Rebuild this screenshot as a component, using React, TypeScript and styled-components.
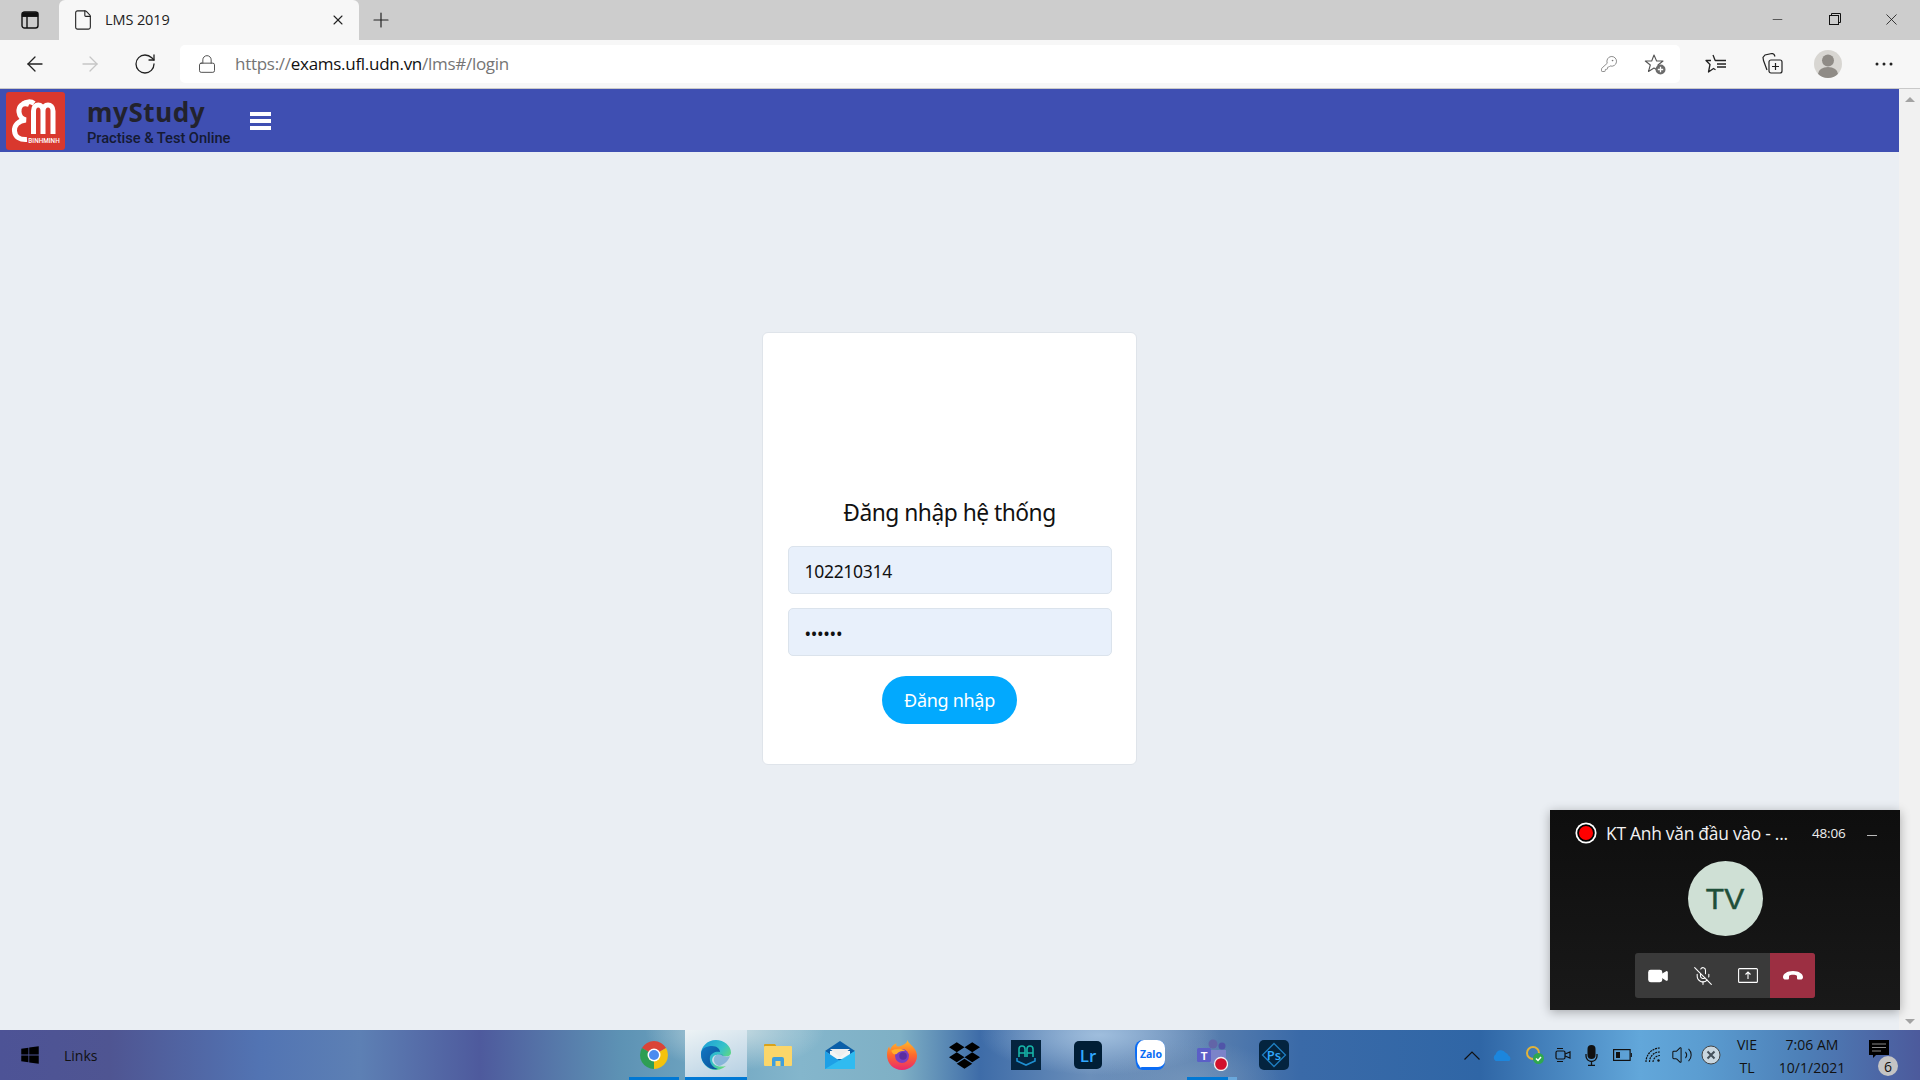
import React from "react";
import styled, { createGlobalStyle } from "styled-components";
import { ArrowLeft, ArrowRight, RotateCw, Lock, KeyRound, X, Plus, Minus, File, Video, MicOff, Volume2 } from "lucide-react";
import { FaDropbox, FaWindows } from "react-icons/fa";

const Global = createGlobalStyle`
  html, body { margin: 0; padding: 0; width: 1920px; height: 1080px; overflow: hidden; }
  * { box-sizing: border-box; }
`;

const Screen = styled.div`
  width: 1920px; height: 1080px; display: flex; flex-direction: column;
  font-family: "Noto Sans", "Open Sans", sans-serif; color: #111; overflow: hidden;
`;
const TabStrip = styled.div`
  height: 40px; background: #cdcdcd; display: flex; align-items: flex-end; flex: none;
`;
const SideToggle = styled.div`
  width: 59px; height: 40px; display: flex; align-items: center; justify-content: center;
`;
const Tab = styled.div`
  width: 300px; height: 40px; background: #f7f7f7; border-radius: 6px 6px 0 0;
  display: flex; align-items: center; padding: 0 13px 0 13px; gap: 11px; color: #222;
`;
const TabTitle = styled.span`
  flex: 1; letter-spacing: -0.1px; font-family: "Open Sans", sans-serif; font-size: 14.5px; padding-bottom: 2px;
`;
const NewTab = styled.div`
  width: 44px; height: 40px; display: flex; align-items: center; justify-content: center;
`;
const WindowButtons = styled.div`
  margin-left: auto; display: flex; height: 40px; align-items: center; padding-bottom: 2px;
`;
const WindowButton = styled.div`
  width: 57px; display: flex; align-items: center; justify-content: center;
`;
const Toolbar = styled.div`
  height: 49px; background: #f7f7f7; border-bottom: 1px solid #c9c9c9; display: flex; align-items: center; flex: none;
  padding: 0 0 1px 7px;
`;
const NavButton = styled.div`
  width: 55px; display: flex; align-items: center; justify-content: center;
`;
const AddressBar = styled.div`
  width: 1500px; height: 38px; margin-left: 8px; background: #fff; border-radius: 5px; display: flex; align-items: center; padding: 0 14px 0 17px;
`;
const Url = styled.div`
  margin-left: 18px; font-size: 17px; letter-spacing: -0.28px; color: #757575; flex: 1;
  font-family: "Open Sans", sans-serif;
`;
const UrlHost = styled.span` color: #111; `;
const AddressTools = styled.div` display: flex; align-items: center; gap: 26px; `;
const ToolIcons = styled.div`
  display: flex; align-items: center; margin-left: 8px;
`;
const ToolIcon = styled.div`
  width: 56px; display: flex; align-items: center; justify-content: center;
`;
const Avatar = styled.div`
  width: 28px; height: 28px; border-radius: 50%; background: #d8d6d2; overflow: hidden; display: flex;
`;
const Main = styled.div`
  flex: 1; min-height: 0; display: flex; position: relative; background: #eaeef3;
`;
const Page = styled.div`
  flex: 1; min-width: 0; display: flex; flex-direction: column;
`;
const AppHeader = styled.header`
  height: 63px; flex: none; background: #3f4fb2; display: flex; align-items: center; padding: 1px 0 0 6px;
`;
const Logo = styled.div`
  width: 59px; height: 58px; background: #d9382e; border-radius: 3px; flex: none;
`;
const Brand = styled.div`
  margin-left: 22px; width: 162px; display: flex; flex-direction: column;
`;
const BrandName = styled.div`
  font-family: "Noto Sans", sans-serif; font-weight: 700; font-size: 26px; line-height: 32px; letter-spacing: 0.6px; color: #22222c;
`;
const BrandTag = styled.div`
  font-family: "Roboto", sans-serif; font-weight: 500; font-size: 15px; line-height: 17px; margin-top: 2px; letter-spacing: -0.05px; color: #151a33; white-space: nowrap;
  transform-origin: left center; transform: scaleX(0.98);
`;
const Burger = styled.div`
  width: 21px; height: 18px; display: flex; flex-direction: column; justify-content: space-between; margin-top: -1px; margin-left: 1px;
`;
const BurgerBar = styled.span`
  display: block; height: 4px; background: #fff;
`;
const PageBody = styled.main`
  flex: 1; display: flex; justify-content: center; padding-top: 180px;
`;
const Card = styled.section`
  width: 375px; height: 433px; background: #fff; border: 1px solid #dfe4ea; border-radius: 6px;
  padding: 165px 24px 0; display: flex; flex-direction: column; align-items: center;
`;
const CardTitle = styled.h1`
  margin: 0 0 18px; font-weight: 400; font-size: 22.8px; line-height: 30px; letter-spacing: -0.5px; color: #111;
  font-family: "Noto Sans", sans-serif;
`;
const Field = styled.input`
  width: 324px; height: 48px; flex: none; background: #e8f0fb; border: 1px solid #dbe3ec; border-radius: 5px;
  padding: 2px 16px 0; font-size: 17.5px; letter-spacing: -0.3px; font-family: "Noto Sans", sans-serif; color: #111; margin-bottom: 14px; outline: none;
`;
const Submit = styled.button`
  width: 135px; height: 48px; border: 0; border-radius: 24px; background: #02a9fe; color: #fff; margin-top: 6px;
  font-family: "Noto Sans", sans-serif; font-size: 18px; letter-spacing: -0.3px; padding: 0;
`;
const ScrollTrack = styled.div`
  width: 21px; background: #f1f1f1; display: flex; flex-direction: column; justify-content: space-between; align-items: center; padding: 8px 0 6px;
`;
const ScrollArrow = styled.div<{ $down?: boolean }>`
  width: 0; height: 0; border-left: 5px solid transparent; border-right: 5px solid transparent;
  ${p => p.$down ? "border-top: 5px solid #a3a3a3;" : "border-bottom: 5px solid #a3a3a3;"}
`;
const CallWindow = styled.aside`
  position: absolute; right: 20px; bottom: 20px; width: 350px; height: 200px; background: linear-gradient(#0e0e0e, #191919);
  box-shadow: 0 2px 10px rgba(0,0,0,.3); color: #fff; display: flex; flex-direction: column; align-items: center;
`;
const CallTop = styled.div`
  width: 100%; height: 45px; padding: 0 20px 0 26px; margin-bottom: 2px; display: flex; align-items: center; font-family: "Open Sans", sans-serif;
`;
const RecDot = styled.span`
  width: 20px; height: 20px; border-radius: 50%; background: #f00; border: 2px solid #000; box-shadow: 0 0 0 2px #fff; flex: none; transform: scale(.88);
`;
const CallTitle = styled.span`
  margin-left: 10px; width: 206px; font-size: 17.4px; letter-spacing: -0.25px; white-space: nowrap; color: #f2f2f2;
`;
const CallTime = styled.span` font-size: 13.5px; letter-spacing: -0.2px; color: #eee; `;
const CallMin = styled.span` margin-left: 22px; width: 10px; height: 1.5px; background: #bbb; margin-top: 6px; `;
const CallAvatar = styled.div`
  width: 75px; height: 75px; border-radius: 50%; background: #cfe0d5; color: #1f4f39; font-size: 30px; display: flex; align-items: center; justify-content: center;
  font-family: "Liberation Sans", sans-serif; margin-top: 4px; -webkit-text-stroke: .5px #1f4f39;
`;
const CallBar = styled.div`
  width: 180px; height: 45px; margin-top: 17px; border-radius: 3px; background: #3a3a3a; display: flex; overflow: hidden;
`;
const CallBtn = styled.div<{ $danger?: boolean }>`
  width: 45px; display: flex; align-items: center; justify-content: center; background: ${p => p.$danger ? "#9c2f42" : "transparent"};
`;
const Taskbar = styled.footer`
  height: 50px; flex: none; display: flex; align-items: stretch; position: relative;
  background:
    radial-gradient(ellipse 90px 40px at 735px 0px, rgba(225,235,235,.75), transparent),
    radial-gradient(ellipse 90px 40px at 1190px 50px, rgba(135,165,195,.5), transparent),
    radial-gradient(ellipse 120px 40px at 1100px 5px, rgba(165,195,225,.9), transparent),
    linear-gradient(90deg, #4d5396 0, #4f5592 110px, #5274b3 260px, #5d80b4 360px, #4e5a9d 480px, #5d92b4 620px, #6ea4c0 700px, #84b6cc 800px, #7fb0c5 900px, #3e6ca8 980px, #6b8fba 1090px, #5b80af 1200px, #3a6aa8 1300px, #2f66a6 1480px, #62a7da 1640px, #5b9dd1 1700px, #4d80b8 1800px, #4c5a9c 1920px);
`;
const StartBtn = styled.div`
  width: 60px; display: flex; align-items: center; justify-content: center; color: #000;
`;
const Links = styled.div`
  width: 563px; display: flex; align-items: center; padding-left: 4px; font-size: 14px; color: #111;
  font-family: "Open Sans", sans-serif;
`;
const Apps = styled.div` display: flex; `;
const AppSlot = styled.div<{ $active?: boolean; $run?: boolean; $split?: boolean }>`
  width: 62px; height: 50px; display: flex; align-items: center; justify-content: center; position: relative;
  ${p => p.$active ? "background: linear-gradient(160deg, #edf3f5, #b3cee2); box-shadow: inset 0 -3px 0 #0078d4;" : ""}
  ${p => p.$run ? `&::after { content: ""; position: absolute; left: 6px; right: 6px; bottom: 0; height: 3px;
    background: ${p.$split ? "linear-gradient(90deg, #0078d4 41px, #6aa8dc 41px)" : "#0078d4"}; }` : ""}
`;
const Tray = styled.div`
  margin-left: auto; display: flex; align-items: center; color: #111; padding-right: 25px;
`;
const TrayIcon = styled.div<{ $w: number }>`
  width: ${p => p.$w}px; display: flex; align-items: center; justify-content: center;
`;
const Lang = styled.div`
  width: 46px; text-align: center; font-size: 14px; line-height: 23px; font-family: "Open Sans", sans-serif; margin-left: -5px; color: #111; padding-top: 1px;
`;
const Clock = styled(Lang)`
  width: 80px; margin-left: 2px;
`;
const Notif = styled.div`
  position: relative; width: 32px; margin-left: 11px; height: 30px;
`;
const NotifGlyph = styled.svg`
  display: block; margin: 0 0 0 6px;
`;
const NotifBadge = styled.span`
  position: absolute; right: -3px; bottom: -6px; width: 20px; height: 20px; border-radius: 50%; background: #c4c4c4; color: #111;
  font-size: 14px; display: flex; align-items: center; justify-content: center; font-family: "Open Sans", sans-serif;
`;

const SW = 1.3;

const AppLogo = () => (
  <svg viewBox="0 0 59 58" width="59" height="58">
    <g fill="none" stroke="#fff" strokeWidth="5">
      <path d="M23 12.500C16 10 12.500 14.500 13 20c.5 5 4 7.500 7 8-8 .5-12 6-11.500 11C9 45 14 48 21 47.500" />
      <path d="M27.500 42V19c0-8 9.500-8 9.500 0v23M37 19c0-8 10-8 10 0v23M17 12c3-2.500 8-3 11-.5" />
    </g>
    <text transform="translate(38 51) scale(.8 1)" fill="#fff" fontSize="8" fontFamily="Roboto, sans-serif" fontWeight="500" textAnchor="middle">BINHMINH</text>
  </svg>
);
const ChromeIcon = () => (
  <svg viewBox="0 0 28 28" width="28" height="28">
    <path d="M14 14L1.900 7A14 14 0 0 1 26.100 7Z" fill="#db4437" />
    <path d="M14 14L26.100 7A14 14 0 0 1 14 28Z" fill="#f4c20d" />
    <path d="M14 14L14 28A14 14 0 0 1 1.900 7Z" fill="#2e9e54" />
    <circle cx="14" cy="14" r="6.500" fill="#fff" /><circle cx="14" cy="14" r="5" fill="#4b8bf0" />
  </svg>
);
const EdgeIcon = () => (
  <svg viewBox="0 0 30 30" width="30" height="30">
    <defs>
      <linearGradient id="edgeA" x1="0" y1="0" x2="1" y2=".7"><stop offset="0" stopColor="#1a9bd8" /><stop offset=".6" stopColor="#35c1c9" /><stop offset="1" stopColor="#6ede6a" /></linearGradient>
      <linearGradient id="edgeB" x1="0" y1="0" x2="1" y2="1"><stop offset="0" stopColor="#1278c4" /><stop offset="1" stopColor="#0c4f96" /></linearGradient>
    </defs>
    <path d="M15 0C6 0 0 7 0 14c0 4 1 8 4 11 5 6 13 6 18 3l3-2c-4 1-9 1-12-2-3-3-2-6 0-8 2-1.500 7-2 8-.500 2 1 9 2 9-3C30 6 23 0 15 0Z" fill="url(#edgeA)" />
    <path d="M0 14c0-6 6-8 11-8 5 0 8 3 8 6-4-1-9 1-10 5-1 5 2 10 8 12-8 2-17-5-17-15Z" fill="url(#edgeB)" />
    <path d="M13 18c1-4 7-5 9-3 0 2 6 2 7 1-1 4-6 9-11 10-3-1-6-4-5-8Z" fill="#0f6cbd" opacity=".35" />
  </svg>
);
const ExplorerIcon = () => (
  <svg viewBox="0 0 28 22" width="28" height="22">
    <path d="M0 1a1 1 0 0 1 1-1h10l2 3H0Z" fill="#d9a21a" />
    <rect y="2" width="28" height="20" rx="1" fill="#fbd66a" />
    <path d="M8 22v-7a2 2 0 0 1 2-2h8a2 2 0 0 1 2 2v7h-3.500v-5h-5v5Z" fill="#3f9fdc" />
  </svg>
);
const MailIcon = () => (
  <svg viewBox="0 0 30 28" width="30" height="28">
    <path d="M0 10L15 0l15 10-15 10Z" fill="#0b5fa8" />
    <path d="M5 10h20v8H5Z" fill="#f5f5f5" /><path d="M5 8h20l-10 8Z" fill="#eee" />
    <path d="M0 10l15 10 15-10v18H0Z" fill="#1ea0e6" />
    <path d="M30 10v18H0Z" fill="#35c2f2" opacity=".8" />
  </svg>
);
const FirefoxIcon = () => (
  <svg viewBox="0 0 28 28" width="30" height="30">
    <defs>
      <linearGradient id="ffA" x1="0" y1="0" x2="0" y2="1"><stop offset="0" stopColor="#ffbd2e" /><stop offset=".5" stopColor="#ff6a2a" /><stop offset="1" stopColor="#e8286f" /></linearGradient>
    </defs>
    <path d="M19 0c1 3 3 4 5 6 3 3 4 6 4 9 0 7-6 13-14 13S0 22 0 14c0-3 .5-6 2-8l1 3c1-3 3-5 6-6-1 2 0 3 2 3 4-1 8-3 8-6Z" fill="url(#ffA)" />
    <circle cx="14" cy="15" r="6.500" fill="#7a3fc1" />
    <path d="M4 10c3-2 9-3 13 0-4 0-6 1-8 3-2 1-4 0-5-3Z" fill="#ffae2c" />
    <circle cx="15" cy="15" r="3.500" fill="#5a2da0" />
  </svg>
);
const ShieldAppIcon = () => (
  <svg viewBox="0 0 30 30" width="30" height="30">
    <rect width="30" height="30" fill="#04243f" />
    <g fill="none" strokeWidth="1.600">
      <path d="M8 17V9a3 3 0 0 1 6 0v8M16 17V9a3 3 0 0 1 6 0v8M8 13h6M16 13h6" stroke="#17b5a8" />
      <path d="M6 18v3l9 4 9-4v-3" stroke="#1f8fd0" />
    </g>
  </svg>
);
const LrIcon = () => (
  <svg viewBox="0 0 28 28" width="28" height="28">
    <rect width="28" height="28" rx="5" fill="#001e36" />
    <text x="14" y="20.500" fill="#31a8ff" fontSize="17" fontWeight="600" fontFamily="Open Sans, sans-serif" textAnchor="middle">Lr</text>
  </svg>
);
const ZaloIcon = () => (
  <svg viewBox="0 0 30 30" width="30" height="30">
    <path d="M8 0h14a8 8 0 0 1 8 8v14a8 8 0 0 1-8 8H8c-2 0-5-1-6-3C0 22 0 15 0 8a8 8 0 0 1 8-8Z" fill="#0a6cf5" />
    <path d="M9 0h13a8 8 0 0 1 8 8v12a7 7 0 0 1-7 7H9c-2 0-2 0-4 .500 0-2-3-3-3-9V8a8 8 0 0 1 7-8Z" fill="#fff" />
    <text x="16" y="18" fill="#0a6cf5" fontSize="10.500" fontWeight="700" fontFamily="Noto Sans, sans-serif" textAnchor="middle">Zalo</text>
  </svg>
);
const TeamsIcon = () => (
  <svg viewBox="0 0 32 32" width="32" height="32">
    <circle cx="17" cy="5" r="4.500" fill="#6264a7" /><circle cx="26" cy="7" r="3.500" fill="#5055a8" />
    <path d="M12 11h18v8a6 6 0 0 1-6 6h-6a6 6 0 0 1-6-6Z" fill="#7b83c9" />
    <rect x="1" y="9" width="14" height="14" rx="1.500" fill="#5b5fc7" />
    <text x="8" y="20.500" fill="#fff" fontSize="11" fontWeight="700" fontFamily="Liberation Sans, sans-serif" textAnchor="middle">T</text>
    <circle cx="25" cy="25" r="6.500" fill="#d2102c" stroke="#f2f2f2" strokeWidth="1.300" />
  </svg>
);
const PsIcon = () => (
  <svg viewBox="0 0 30 30" width="30" height="30">
    <rect width="30" height="30" rx="5" fill="#04243f" />
    <path d="M15 3.500L26.500 15 15 26.500 3.500 15Z" fill="none" stroke="#1f7fc0" strokeWidth="1.300" />
    <text x="15" y="20" fill="#31a8ff" fontSize="13" fontWeight="600" fontFamily="Open Sans, sans-serif" textAnchor="middle">Ps</text>
  </svg>
);

export default function App() {
  return (
    <Screen>
      <Global />
      <TabStrip>
        <SideToggle>
          <svg width="18" height="18" viewBox="0 0 18 18" fill="none" stroke="#111" strokeWidth="1.400">
            <rect x="1" y="1" width="16" height="16" rx="2.500" /><path d="M1 5h16M6 5v12" /><path d="M1.500 2h15v3h-15Z" fill="#111" />
          </svg>
        </SideToggle>
        <Tab>
          <File size={22} strokeWidth={1.2} color="#222" />
          <TabTitle>LMS 2019</TabTitle>
          <X size={16} strokeWidth={1.6} color="#222" />
        </Tab>
        <NewTab><Plus size={24} strokeWidth={1.2} color="#222" /></NewTab>
        <WindowButtons>
          <WindowButton><Minus size={15} strokeWidth={1} color="#111" /></WindowButton>
          <WindowButton>
            <svg width="14" height="14" viewBox="0 0 14 14" fill="none" stroke="#111"><rect x="1.500" y="3.500" width="9" height="9" /><path d="M3.500 3.500v-2h9v9h-2" /></svg>
          </WindowButton>
          <WindowButton><X size={19} strokeWidth={1} color="#111" /></WindowButton>
        </WindowButtons>
      </TabStrip>
      <Toolbar>
        <NavButton><ArrowLeft size={24} strokeWidth={SW} color="#222" /></NavButton>
        <NavButton><ArrowRight size={24} strokeWidth={SW} color="#c6c6c6" /></NavButton>
        <NavButton><RotateCw size={24} strokeWidth={SW} color="#222" /></NavButton>
        <AddressBar>
          <Lock size={20} strokeWidth={1.1} color="#444" />
          <Url>https://<UrlHost>exams.ufl.udn.vn</UrlHost>/lms#/login</Url>
          <AddressTools>
            <KeyRound size={18} strokeWidth={1.1} color="#777" />
            <svg width="22" height="22" viewBox="0 0 22 22" fill="none">
              <path d="M10 2l2.600 6h6.400l-5 4 1.800 6.500L10 15l-5.500 3.500L6.300 12l-5-4h6.400Z" stroke="#555" strokeWidth="1.100" strokeLinejoin="round" />
              <circle cx="16.500" cy="16.500" r="5" fill="#6b6b6b" /><path d="M16.500 13.800v5.400M13.800 16.500h5.400" stroke="#fff" strokeWidth="1.300" />
            </svg>
          </AddressTools>
        </AddressBar>
        <ToolIcons>
          <ToolIcon>
            <svg width="22" height="20" viewBox="0 0 22 20" fill="none" stroke="#222" strokeWidth="1.300" strokeLinejoin="round">
              <path d="M8 1l2.200 5.500H14M6 6.500H1l4 4L3.500 18l5-3.500 2 1.200M12 10h9M12 13h9M14 6.500h7" />
            </svg>
          </ToolIcon>
          <ToolIcon>
            <svg width="21" height="21" viewBox="0 0 21 21" fill="none" stroke="#222" strokeWidth="1.200">
              <path d="M5 17L1.500 7.500 1 4.500 3 2l7-1.500c1.500 0 2.500 1 3 3" />
              <rect x="7" y="7" width="13" height="13" rx="2" /><path d="M13.500 10v7M10 13.500h7" />
            </svg>
          </ToolIcon>
          <ToolIcon>
            <Avatar>
              <svg width="28" height="28" viewBox="0 0 28 28" fill="#8f8b86"><circle cx="14" cy="10.500" r="6" /><ellipse cx="14" cy="24" rx="10" ry="7" /></svg>
            </Avatar>
          </ToolIcon>
          <ToolIcon>
            <svg width="18" height="4" viewBox="0 0 18 4" fill="#222"><circle cx="2" cy="2" r="1.500" /><circle cx="9" cy="2" r="1.500" /><circle cx="16" cy="2" r="1.500" /></svg>
          </ToolIcon>
        </ToolIcons>
      </Toolbar>
      <Main>
        <Page>
          <AppHeader>
            <Logo><AppLogo /></Logo>
            <Brand>
              <BrandName>myStudy</BrandName>
              <BrandTag>Practise &amp; Test Online</BrandTag>
            </Brand>
            <Burger><BurgerBar /><BurgerBar /><BurgerBar /></Burger>
          </AppHeader>
          <PageBody>
            <Card>
              <CardTitle>Đăng nhập hệ thống</CardTitle>
              <Field readOnly value="102210314" />
              <Field readOnly type="password" value="123456" />
              <Submit type="button">Đăng nhập</Submit>
            </Card>
          </PageBody>
        </Page>
        <ScrollTrack><ScrollArrow /><ScrollArrow $down /></ScrollTrack>
        <CallWindow>
          <CallTop>
            <RecDot />
            <CallTitle>KT Anh văn đầu vào - ...</CallTitle>
            <CallTime>48:06</CallTime>
            <CallMin />
          </CallTop>
          <CallAvatar>TV</CallAvatar>
          <CallBar>
            <CallBtn><Video size={22} fill="#fff" color="#fff" strokeWidth={1.4} /></CallBtn>
            <CallBtn><MicOff size={20} color="#fff" strokeWidth={1.3} /></CallBtn>
            <CallBtn>
              <svg width="20" height="15" viewBox="0 0 20 15" fill="none" stroke="#fff" strokeWidth="1.100"><rect x=".6" y=".6" width="18.800" height="13.800" rx="1" /><path d="M10 11V4M7.500 6.500L10 4l2.500 2.500" /></svg>
            </CallBtn>
            <CallBtn $danger>
              <svg width="20" height="9" viewBox="0 0 20 9" fill="#fff"><path d="M0 6c0-3 4-6 10-6s10 3 10 6c0 1-.5 2-1.500 2.500h-3c-1 0-1.500-.5-1.500-1.500V5C13 4 12 3.800 10 3.800S7 4 6 5v2c0 1-.5 1.500-1.500 1.500h-3C.5 8 0 7 0 6Z" /></svg>
            </CallBtn>
          </CallBar>
        </CallWindow>
      </Main>
      <Taskbar>
        <StartBtn><FaWindows size={20} /></StartBtn>
        <Links>Links</Links>
        <Apps>
          <AppSlot $run><ChromeIcon /></AppSlot>
          <AppSlot $active><EdgeIcon /></AppSlot>
          <AppSlot><ExplorerIcon /></AppSlot>
          <AppSlot><MailIcon /></AppSlot>
          <AppSlot><FirefoxIcon /></AppSlot>
          <AppSlot><FaDropbox size={31} color="#000" /></AppSlot>
          <AppSlot><ShieldAppIcon /></AppSlot>
          <AppSlot><LrIcon /></AppSlot>
          <AppSlot><ZaloIcon /></AppSlot>
          <AppSlot $run $split><TeamsIcon /></AppSlot>
          <AppSlot><PsIcon /></AppSlot>
        </Apps>
        <Tray>
          <TrayIcon $w={30}>
            <svg width="16" height="9" viewBox="0 0 16 9" fill="none" stroke="#111" strokeWidth="1.200"><path d="M.5 8.500L8 1l7.500 7.500" /></svg>
          </TrayIcon>
          <TrayIcon $w={30}>
            <svg width="20" height="13" viewBox="0 0 22 14"><path d="M4 13a4 4 0 0 1 0-7 6 6 0 0 1 11-2 4 4 0 0 1 3 3 3.500 3.500 0 0 1 1 6Z" fill="#1c86dd" /></svg>
          </TrayIcon>
          <TrayIcon $w={36}>
            <svg width="20" height="20" viewBox="0 0 20 20"><circle cx="8" cy="8" r="6" fill="none" stroke="#e2b33a" strokeWidth="2" /><circle cx="13.500" cy="13.500" r="5.500" fill="#2fa84f" /><path d="M11 13.500l2 2 3-3.500" stroke="#fff" strokeWidth="1.500" fill="none" /></svg>
          </TrayIcon>
          <TrayIcon $w={20}>
            <svg width="16" height="20" viewBox="0 0 16 20" fill="none" stroke="#111" strokeWidth="1.200"><rect x="1" y="6" width="9" height="8" rx="1.500" /><path d="M10 9l5-2v6l-5-2M2 3.500h6M2 16.500h6" /></svg>
          </TrayIcon>
          <TrayIcon $w={36}>
            <svg width="13" height="21" viewBox="0 0 13 21" fill="none" stroke="#111" strokeWidth="1.300"><rect x="2.500" y="0" width="8" height="14" rx="4" fill="#111" stroke="none" /><path d="M1 9v2a5.500 5.500 0 0 0 11 0V9M6.500 16.500V20M3 20.300h7" /></svg>
          </TrayIcon>
          <TrayIcon $w={26}>
            <svg width="19" height="12" viewBox="0 0 19 12" fill="none" stroke="#111" strokeWidth="1.200"><rect x=".6" y=".6" width="16.500" height="10.800" /><rect x="3" y="3" width="4" height="6" fill="#111" stroke="none" /><path d="M18.300 4v4" /></svg>
          </TrayIcon>
          <TrayIcon $w={36}>
            <svg width="16" height="16" viewBox="0 0 16 16" fill="none" stroke="#111" strokeWidth="1.200" strokeDasharray="2 .8"><path d="M1 15A14 14 0 0 1 15 1M4.500 15A10 10 0 0 1 15 5M8 15A7 7 0 0 1 15 8.500" /><circle cx="13.500" cy="13.500" r="1.200" fill="#111" stroke="none" /></svg>
          </TrayIcon>
          <TrayIcon $w={22}><Volume2 size={22} strokeWidth={1.1} /></TrayIcon>
          <TrayIcon $w={36}>
            <svg width="20" height="20" viewBox="0 0 20 20"><circle cx="10" cy="10" r="9" fill="#c9d7e0" stroke="#444" strokeWidth="1" /><path d="M6.500 6.500l7 7m0-7l-7 7" stroke="#44505a" strokeWidth="2" /></svg>
          </TrayIcon>
          <Lang>VIE<br />TL</Lang>
          <Clock>7:06 AM<br />10/1/2021</Clock>
          <Notif>
            <NotifGlyph width="20" height="20" viewBox="0 0 20 20"><path d="M0 0h20v15H7l-3 3v-3H0Z" fill="#000" /><path d="M3 4h14M3 7.500h14M3 11h9" stroke="#888" strokeWidth="1" /></NotifGlyph>
            <NotifBadge>6</NotifBadge>
          </Notif>
        </Tray>
      </Taskbar>
    </Screen>
  );
}
